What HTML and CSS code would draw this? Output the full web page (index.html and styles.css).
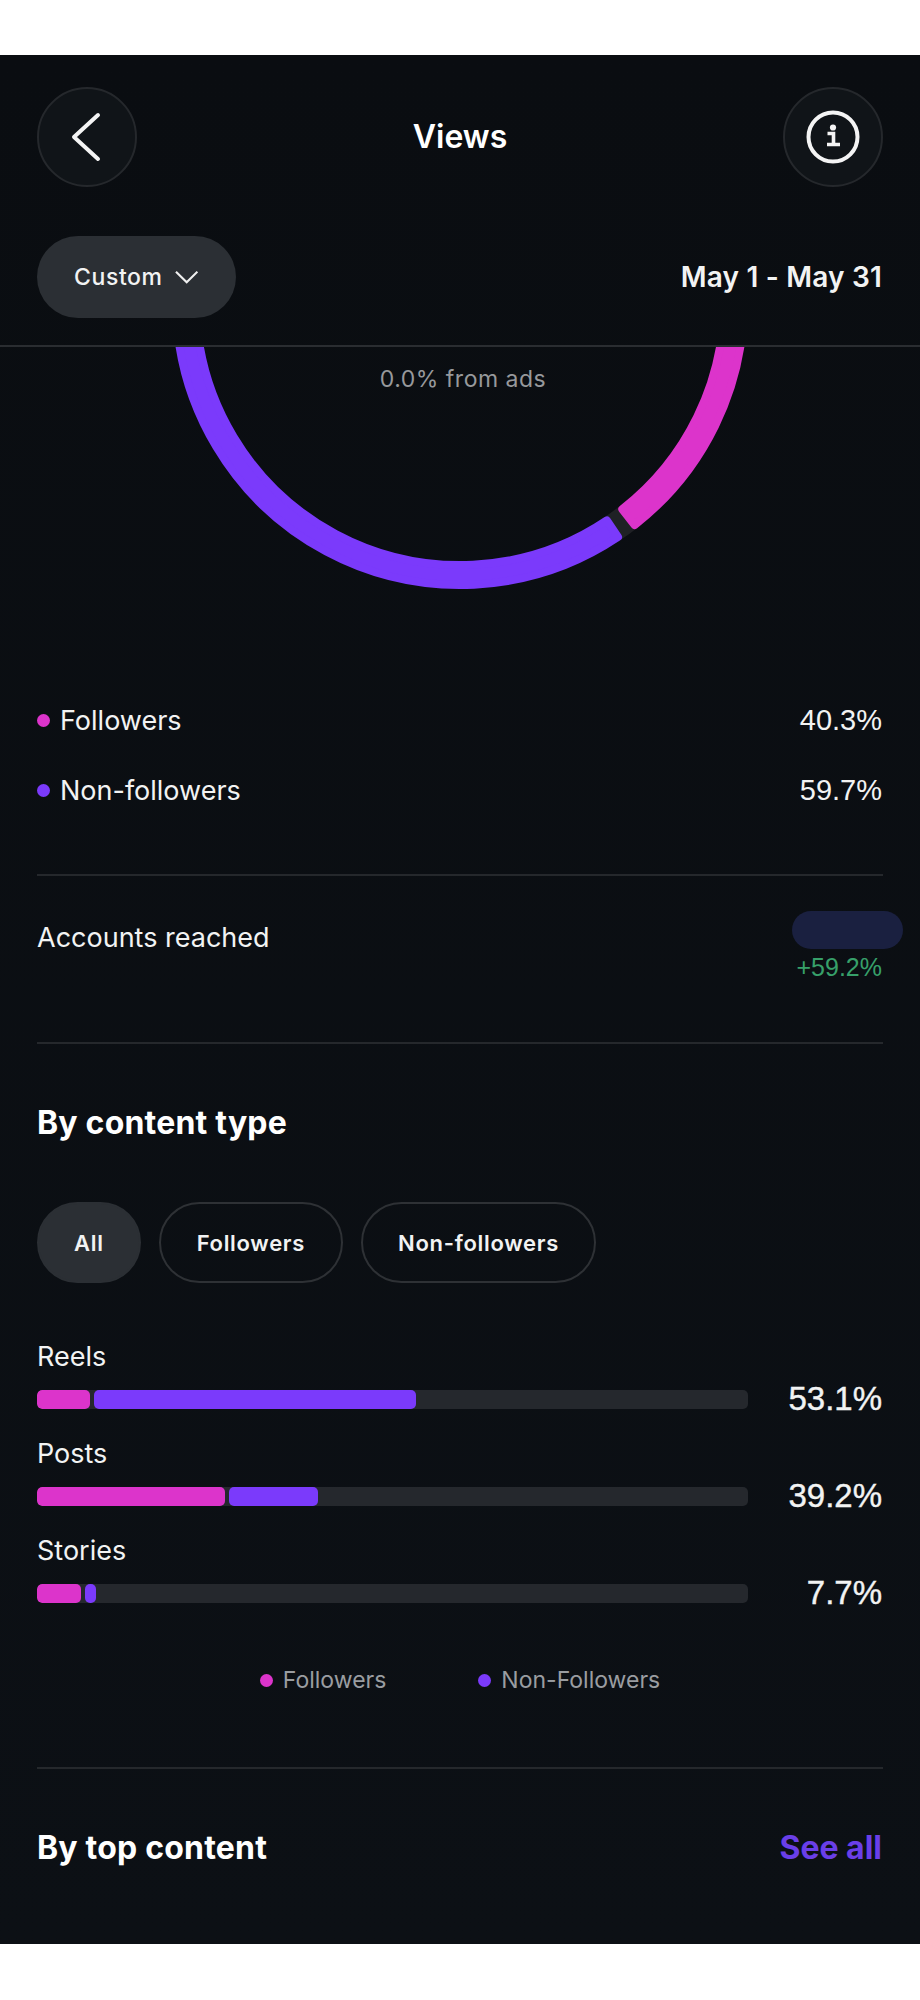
FILE: index.html
```html
<!DOCTYPE html>
<html lang="en">
<head>
	<meta charset="utf-8">
	<title>Views</title>
	<link rel="stylesheet" href="styles.css">
</head>
<body>
	<div class="screen">
		<header class="top">
			<div class="topbar">
				<div class="round-btn">
					<svg width="96" height="96" viewBox="0 0 96 96"><path d="M59 26 L35 48 L59 70" fill="none" stroke="#f4f4f4" stroke-width="4" stroke-linecap="round" stroke-linejoin="round"/></svg>
				</div>
				<div class="title">Views</div>
				<div class="round-btn">
					<svg width="96" height="96" viewBox="0 0 96 96">
						<circle cx="48" cy="48" r="24.5" fill="none" stroke="#f4f4f4" stroke-width="4"/>
						<circle cx="48" cy="38.5" r="3.1" fill="#f4f4f4"/>
						<path d="M42.5 44.5 H48.5 V55.5 M42 55.5 H55" fill="none" stroke="#f4f4f4" stroke-width="3.6"/>
					</svg>
				</div>
			</div>
			<div class="filterbar">
				<div class="custom-pill">
					Custom
					<svg width="24" height="14" viewBox="0 0 24 14"><path d="M1 1.5 L12 12.5 L23 1.5" fill="none" stroke="#f0f0f0" stroke-width="2.2"/></svg>
				</div>
				<div class="date-range">May 1 - May 31</div>
			</div>
		</header>

		<div class="chart">
			<svg class="donut" width="920" height="260" viewBox="0 346 920 260">
				<circle cx="460" cy="300" r="274" fill="none" stroke="#1f2125" stroke-width="28" stroke-dasharray="30 1800" stroke-dashoffset="-243"/>
				<path d="M176 300 A284 284 0 0 0 618 536 L606.9 519.4 A264 264 0 0 1 196 300 Z" fill="#7b3afb" stroke="#7b3afb" stroke-width="8" stroke-linejoin="round"/>
				<path d="M634.6 524 A284 284 0 0 0 744 300 L724 300 A264 264 0 0 1 622.3 508.2 Z" fill="#dc34cb" stroke="#dc34cb" stroke-width="8" stroke-linejoin="round"/>
			</svg>
			<div class="ads-note">0.0% from ads</div>
		</div>

		<section class="split">
			<div class="split-row">
				<span class="split-name"><i class="dot pink"></i>Followers</span>
				<span class="num">40.3%</span>
			</div>
			<div class="split-row">
				<span class="split-name"><i class="dot purple"></i>Non-followers</span>
				<span class="num">59.7%</span>
			</div>
		</section>

		<section class="reached">
			<span class="reached-label">Accounts reached</span>
			<div class="reached-value">
				<div class="redact"></div>
				<div class="delta">+59.2%</div>
			</div>
		</section>

		<section class="by-type">
			<h2 class="heading">By content type</h2>
			<div class="chips">
				<div class="chip active">All</div>
				<div class="chip followers">Followers</div>
				<div class="chip">Non-followers</div>
			</div>

			<div class="bar-row">
				<div class="bar-label">Reels</div>
				<div class="bar-line">
					<div class="track">
						<div class="seg pink" style="width:53px"></div>
						<div class="seg purple" style="width:322px"></div>
					</div>
					<div class="bar-pct">53.1%</div>
				</div>
			</div>
			<div class="bar-row">
				<div class="bar-label">Posts</div>
				<div class="bar-line">
					<div class="track">
						<div class="seg pink" style="width:188px"></div>
						<div class="seg purple" style="width:89px"></div>
					</div>
					<div class="bar-pct">39.2%</div>
				</div>
			</div>
			<div class="bar-row">
				<div class="bar-label">Stories</div>
				<div class="bar-line">
					<div class="track">
						<div class="seg pink" style="width:44px"></div>
						<div class="seg purple" style="width:11px"></div>
					</div>
					<div class="bar-pct">7.7%</div>
				</div>
			</div>

			<div class="legend">
				<span class="legend-item"><i class="dot pink"></i>Followers</span>
				<span class="legend-item"><i class="dot purple"></i>Non-Followers</span>
			</div>
		</section>

		<section class="by-top">
			<h2 class="heading">By top content</h2>
			<div class="see-all">See all</div>
		</section>
	</div>
</body>
</html>
```

FILE: styles.css
```css
body {
	margin: 0;
	background: #fff;
	font-family: Inter, "Liberation Sans", sans-serif;
	color: #f2f3f3;
}
.screen {
	margin-top: 55px;
	height: 1889px;
	background: linear-gradient(#0a0d11, #0c1015);
	overflow: hidden;
}
.top {
	padding: 32px 37px 27px;
	border-bottom: 2px solid #2a2d31;
}
.topbar {
	display: flex;
	justify-content: space-between;
	align-items: center;
}
.round-btn {
	width: 96px;
	height: 96px;
	border: 2px solid #25282c;
	border-radius: 50%;
	background: #101418;
}
.round-btn svg {
	display: block;
}
.title {
	margin-top: -2px;
	font-size: 32px;
	font-weight: 600;
	color: #fff;
}
.filterbar {
	display: flex;
	justify-content: space-between;
	align-items: center;
	margin-top: 49px;
}
.custom-pill {
	display: flex;
	align-items: center;
	gap: 12px;
	height: 82px;
	padding: 0 38px 0 37px;
	box-sizing: border-box;
	width: 199px;
	border-radius: 41px;
	background: #2b2f34;
	font-size: 23px;
	font-weight: 500;
	letter-spacing: 0.6px;
}
.date-range {
	margin-right: 1px;
	font-size: 28px;
	font-weight: 600;
	letter-spacing: 0.2px;
}
.chart {
	position: relative;
}
.donut {
	display: block;
}
.ads-note {
	position: absolute;
	top: 18px;
	left: 3px;
	width: 100%;
	text-align: center;
	font-size: 23px;
	letter-spacing: 0.5px;
	color: #97999c;
}
.split {
	margin: 78px 37px 0;
	padding-bottom: 49px;
	border-bottom: 2px solid #25282c;
}
.split-row {
	display: flex;
	justify-content: space-between;
	align-items: center;
	height: 70px;
}
.split-name {
	display: flex;
	align-items: center;
	font-size: 27px;
}
.split-name .dot {
	margin-right: 10px;
}
.dot {
	display: inline-block;
	width: 13px;
	height: 13px;
	border-radius: 50%;
}
.pink {
	background: #dc34cb;
}
.purple {
	background: #7b3afb;
}
.num {
	margin-right: 1px;
	font-family: "Liberation Sans", sans-serif;
	font-size: 29px;
}
.reached {
	display: flex;
	justify-content: space-between;
	margin: 0 37px;
	height: 166px;
	border-bottom: 2px solid #25282c;
}
.reached-label {
	margin-top: 45px;
	font-size: 27px;
}
.reached-value {
	position: relative;
	width: 111px;
	text-align: right;
}
.redact {
	position: absolute;
	top: 35px;
	right: -20px;
	width: 111px;
	height: 38px;
	border-radius: 19px;
	background: #1a2040;
}
.delta {
	margin-top: 77px;
	margin-right: 1px;
	font-family: "Liberation Sans", sans-serif;
	font-size: 25px;
	color: #37a06a;
}
.by-type {
	margin: 0 37px;
	padding-top: 59px;
	height: 664px;
	border-bottom: 2px solid #25282c;
}
.heading {
	margin: 0;
	font-size: 32px;
	font-weight: 700;
	letter-spacing: 0.2px;
	color: #fff;
}
.chips {
	display: flex;
	gap: 18px;
	margin-top: 60px;
	margin-bottom: 57px;
}
.chip {
	display: flex;
	align-items: center;
	height: 81px;
	padding: 0 35px;
	box-sizing: border-box;
	border: 2px solid #2e3135;
	border-radius: 41px;
	font-size: 22px;
	font-weight: 600;
	letter-spacing: 0.7px;
}
.chip.active {
	padding: 0 35px;
	background: #2b2f34;
	border-color: #2b2f34;
}
.chip.followers {
	padding: 0 36px;
}
.bar-row {
	height: 97px;
}
.bar-label {
	font-size: 27px;
	line-height: 34px;
}
.bar-line {
	display: flex;
	justify-content: space-between;
	align-items: center;
	height: 38px;
	margin-top: 6px;
}
.track {
	display: flex;
	gap: 4px;
	width: 711px;
	height: 19px;
	border-radius: 5px;
	background: #25282d;
	overflow: hidden;
}
.seg {
	border-radius: 5px;
}
.bar-pct {
	margin-right: 1px;
	font-family: "Liberation Sans", sans-serif;
	font-size: 33px;
	-webkit-text-stroke: 0.4px #f2f3f3;
}
.legend {
	display: flex;
	justify-content: center;
	gap: 92px;
	margin-top: 35px;
	color: #9a9da1;
}
.legend-item {
	display: flex;
	align-items: center;
	font-size: 23px;
}
.legend-item .dot {
	margin-right: 10px;
}
.by-top {
	display: flex;
	justify-content: space-between;
	align-items: center;
	margin: 59px 37px 0;
}
.see-all {
	margin-right: 1px;
	font-size: 32px;
	font-weight: 700;
	color: #6a3fe8;
}
```
